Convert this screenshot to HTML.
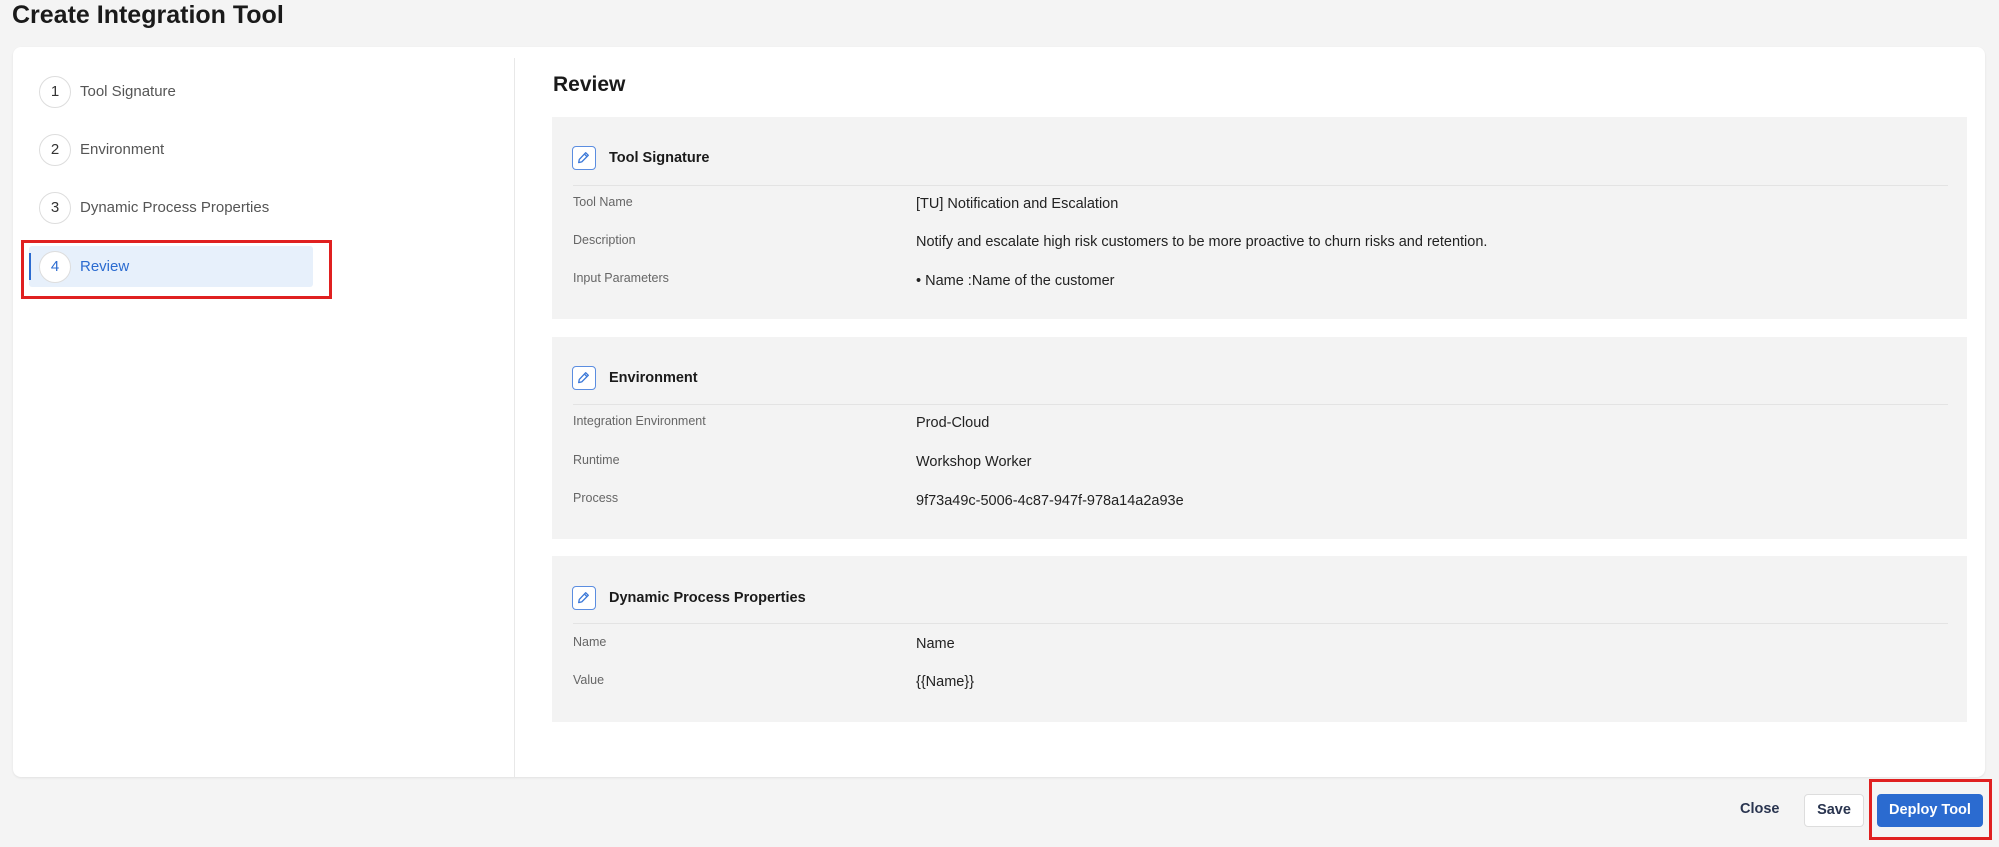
<!DOCTYPE html>
<html><head><meta charset="utf-8"><style>
*{box-sizing:border-box;margin:0;padding:0}
body{width:1999px;height:847px;background:#f4f4f4;font-family:"Liberation Sans",sans-serif;position:relative;overflow:hidden;color:#222}
.a{position:absolute}
.title{left:12px;top:0px;font-size:25px;font-weight:bold;color:#1a1a1a;line-height:30px}
.card{left:13px;top:47px;width:1972px;height:730px;background:#fff;border-radius:8px;box-shadow:0 1px 2px rgba(0,0,0,.08)}
.div{left:514px;top:58px;width:1px;height:719px;background:#e8e8e8}
.circ{width:32px;height:32px;border-radius:50%;border:1px solid #ddd;background:#fff;text-align:center;line-height:30px;font-size:15px;color:#333}
.st{font-size:15px;color:#555;line-height:20px}
.box{left:552px;width:1415px;background:#f3f3f3}
.ic{width:24px;height:24px;border:1.5px solid #5b8de0;border-radius:4px;background:#fff}
.sh{font-size:14.5px;font-weight:bold;color:#1a1a1a;line-height:20px}
.hr{left:573px;width:1375px;height:1px;background:#e3e3e3}
.lb{left:573px;font-size:12.5px;color:#666;line-height:16px}
.vl{left:916px;font-size:14.5px;color:#222;line-height:18px}
</style></head><body>
<div class="a title">Create Integration Tool</div>
<div class="a card"></div>
<div class="a div"></div>

<div class="a circ" style="left:39px;top:76px">1</div><div class="a st" style="left:80px;top:82px">Tool Signature</div>
<div class="a circ" style="left:39px;top:134px">2</div><div class="a st" style="left:80px;top:140px">Environment</div>
<div class="a circ" style="left:39px;top:192px">3</div><div class="a st" style="left:80px;top:198px">Dynamic Process Properties</div>
<div class="a" style="left:29px;top:246px;width:284px;height:41px;background:#e7f0fb;border-radius:3px"></div>
<div class="a" style="left:29px;top:253px;width:2px;height:27px;background:#2b6bd0"></div>
<div class="a circ" style="left:39px;top:251px;color:#2b6bd0">4</div><div class="a st" style="left:80px;top:257px;color:#2b6bd0">Review</div>
<div class="a" style="left:21px;top:240px;width:311px;height:59px;border:3px solid #e02020"></div>

<div class="a" style="left:553px;top:71px;font-size:21px;font-weight:bold;color:#1a1a1a;line-height:28px">Review</div>

<div class="a box" style="top:117px;height:202px"></div>
<div class="a box" style="top:337px;height:202px"></div>
<div class="a box" style="top:556px;height:166px"></div>

<svg width="0" height="0" style="position:absolute"><defs><symbol id="pen" viewBox="0 0 24 24"><path d="M14.5 6.5l3 3-7.5 7.5-3.5.8.7-3.6z M13 8l3 3" fill="none" stroke="#3b78d8" stroke-width="1.5" stroke-linejoin="round"/></symbol></defs></svg>

<div class="a ic" style="left:572px;top:146px"><svg width="21" height="21"><use href="#pen"/></svg></div>
<div class="a sh" style="left:609px;top:148px">Tool Signature</div>
<div class="a hr" style="top:185px"></div>
<div class="a lb" style="top:194px">Tool Name</div><div class="a vl" style="top:195px">[TU] Notification and Escalation</div>
<div class="a lb" style="top:232px">Description</div><div class="a vl" style="top:233px">Notify and escalate high risk customers to be more proactive to churn risks and retention.</div>
<div class="a lb" style="top:270px">Input Parameters</div><div class="a vl" style="top:272px">• Name :Name of the customer</div>

<div class="a ic" style="left:572px;top:366px"><svg width="21" height="21"><use href="#pen"/></svg></div>
<div class="a sh" style="left:609px;top:368px">Environment</div>
<div class="a hr" style="top:404px"></div>
<div class="a lb" style="top:413px">Integration Environment</div><div class="a vl" style="top:414px">Prod-Cloud</div>
<div class="a lb" style="top:452px">Runtime</div><div class="a vl" style="top:453px">Workshop Worker</div>
<div class="a lb" style="top:490px">Process</div><div class="a vl" style="top:492px">9f73a49c-5006-4c87-947f-978a14a2a93e</div>

<div class="a ic" style="left:572px;top:586px"><svg width="21" height="21"><use href="#pen"/></svg></div>
<div class="a sh" style="left:609px;top:588px">Dynamic Process Properties</div>
<div class="a hr" style="top:623px"></div>
<div class="a lb" style="top:634px">Name</div><div class="a vl" style="top:635px">Name</div>
<div class="a lb" style="top:672px">Value</div><div class="a vl" style="top:673px">{{Name}}</div>

<div class="a" style="left:1740px;top:801px;font-size:14.5px;font-weight:bold;color:#2a3550">Close</div>
<div class="a" style="left:1804px;top:794px;width:60px;height:33px;background:#fff;border:1px solid #ddd;border-radius:4px;text-align:center;line-height:31px;font-size:14.5px;font-weight:bold;color:#2a3550">Save</div>
<div class="a" style="left:1877px;top:794px;width:106px;height:33px;background:#2b6bd0;border-radius:4px;text-align:center;line-height:33px;font-size:14.5px;font-weight:bold;color:#fff">Deploy Tool</div>
<div class="a" style="left:1869px;top:779px;width:123px;height:61px;border:3px solid #e02020"></div>
</body></html>
